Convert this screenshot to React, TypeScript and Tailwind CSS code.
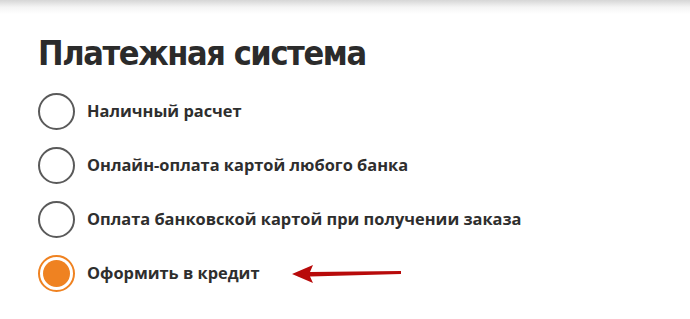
const options = [
  'Наличный расчет',
  'Онлайн-оплата картой любого банка',
  'Оплата банковской картой при получении заказа',
  'Оформить в кредит',
]

function Radio({ checked }: { checked: boolean }) {
  if (checked) {
    return (
      <span className="flex h-[37px] w-[37px] shrink-0 items-center justify-center rounded-full border-2 border-[#ef8221] bg-white">
        <span className="h-[27px] w-[27px] rounded-full bg-[#ef8221]" />
      </span>
    )
  }
  return <span className="h-[37px] w-[37px] shrink-0 rounded-full border-2 border-[#5a5a5a] bg-white" />
}

export default function App() {
  const selected = 3

  return (
    <div className="relative h-[319px] w-[690px] overflow-hidden bg-white font-['Open_Sans',sans-serif] text-[#333]">
      {/* top shadow */}
      <div className="h-[14px] w-full bg-gradient-to-b from-[#d6d6d6] via-[#f4f4f4] to-white" />

      <div className="pl-[38px]">
        <h1 className="mt-[17px] font-['DejaVu_Sans_Condensed','DejaVu_Sans',sans-serif] text-[34px] font-bold leading-[44px] tracking-[-1.4px] text-[#2b2b2b]">
          Платежная система
        </h1>

        <div className="mt-[18px] flex flex-col gap-[17px]">
          {options.map((o, i) => (
            <div key={o} className="flex items-center gap-[12px]">
              <Radio checked={i === selected} />
              <span className="text-[16.4px] font-bold text-[#2e2e2e]">{o}</span>
              {i === selected && (
                <svg width="112" height="22" viewBox="0 0 112 22" className="ml-[20px]">
                  <path d="M1 11 L22 2 L19 9 L110 8 L110 11 L19 13.5 L22 20 Z" fill="#b80a0a" />
                </svg>
              )}
            </div>
          ))}
        </div>
      </div>
    </div>
  )
}
